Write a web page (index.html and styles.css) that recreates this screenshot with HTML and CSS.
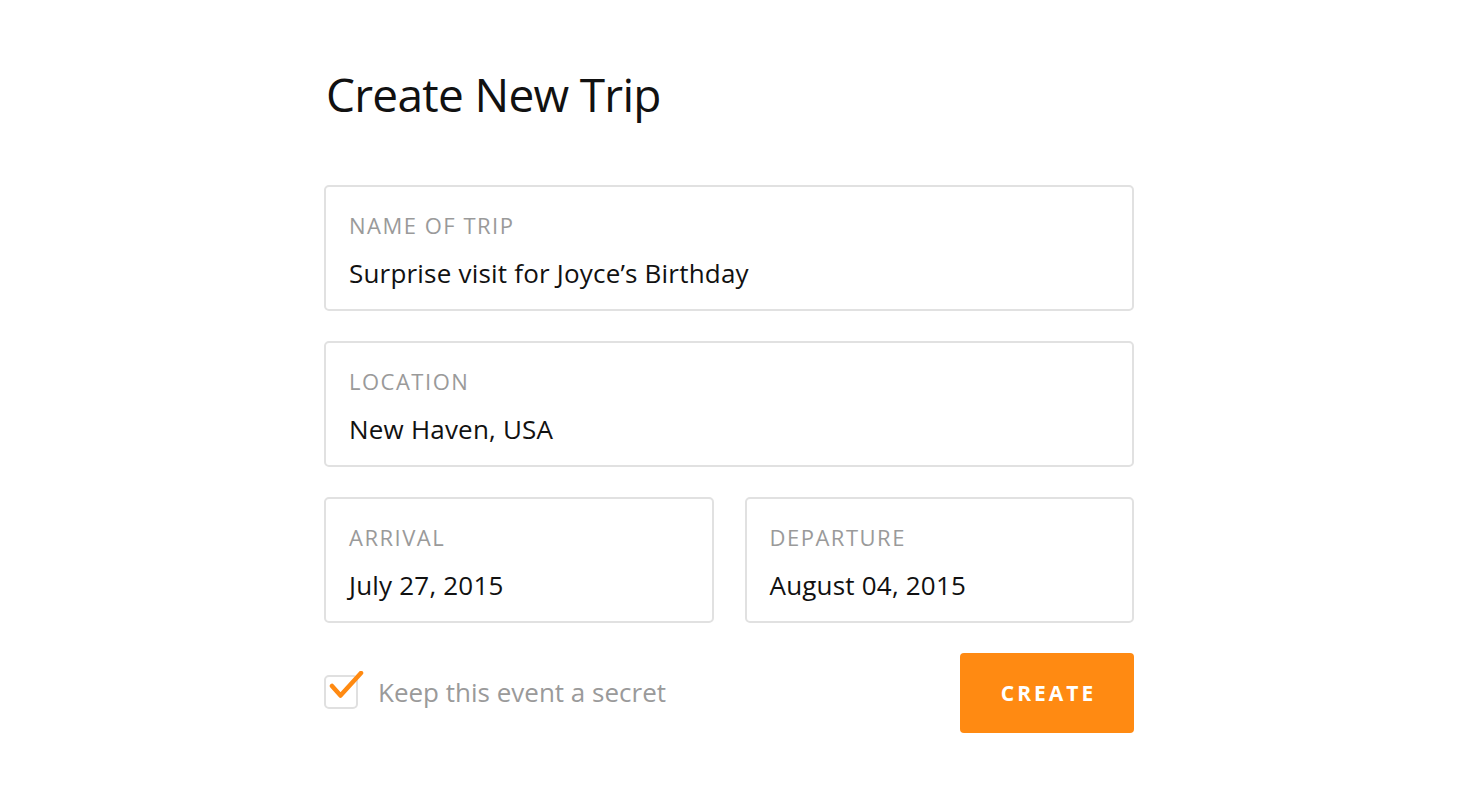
FILE: index.html
```html
<!DOCTYPE html>
<html>
<head>
<meta charset="utf-8">
<link rel="stylesheet" href="styles.css">
</head>
<body>
<main class="page">
  <h1 class="title">Create New Trip</h1>
  <form class="form">
    <div class="field">
      <div class="label">NAME OF TRIP</div>
      <div class="value">Surprise visit for Joyce’s Birthday</div>
    </div>
    <div class="field">
      <div class="label">LOCATION</div>
      <div class="value">New Haven, USA</div>
    </div>
    <div class="row">
      <div class="field">
        <div class="label">ARRIVAL</div>
        <div class="value">July 27, 2015</div>
      </div>
      <div class="field">
        <div class="label">DEPARTURE</div>
        <div class="value">August 04, 2015</div>
      </div>
    </div>
    <div class="actions">
      <label class="check">
        <span class="box">
          <svg class="tick" width="40" height="40" viewBox="0 0 40 40"><path d="M6 15 L14.5 24.5 L35 2" fill="none" stroke="#ff8a12" stroke-width="4.5" stroke-linecap="round" stroke-linejoin="round"/></svg>
        </span>
        <span class="check-text">Keep this event a secret</span>
      </label>
      <button type="button" class="btn">CREATE</button>
    </div>
  </form>
</main>
</body>
</html>
```

FILE: styles.css
```css
* { box-sizing: border-box; }
html, body { margin: 0; padding: 0; background: #fff; }
body { font-family: "Open Sans", "Noto Sans", sans-serif; color: #111; }
.page { width: 810px; margin-left: 324px; padding-top: 66px; }
.title { margin: 0 0 0 2px; font-weight: 400; font-size: 46px; line-height: 56px; letter-spacing: -0.7px; color: #111; }
.form { margin-top: 63px; display: flex; flex-direction: column; gap: 30px; }
.field { height: 126px; border: 2px solid #e1e1e1; border-radius: 5px; padding: 26px 23px 0; }
.label { font-size: 22px; line-height: 24px; letter-spacing: 1.5px; color: #9a9a9a; }
.value { margin-top: 21px; font-size: 26px; line-height: 30px; letter-spacing: 0.2px; color: #111; }
.row { display: flex; gap: 31px; }
.row .field { flex: 1; }
.actions { display: flex; justify-content: space-between; align-items: center; }
.check { display: flex; align-items: center; gap: 20px; }
.box { position: relative; width: 34px; height: 34px; margin-top: -3px; border: 2px solid #e0e0e0; border-radius: 5px; }
.tick { position: absolute; left: 0; top: -6px; }
.check-text { font-size: 26px; color: #9a9a9a; margin-top: -3px; }
.btn { width: 174px; height: 80px; border: 0; border-radius: 4px; background: #ff8a12; color: #fff; font-family: "Open Sans", sans-serif; font-weight: 700; font-size: 21px; letter-spacing: 3px; padding: 0 0 0 3px; }
```
